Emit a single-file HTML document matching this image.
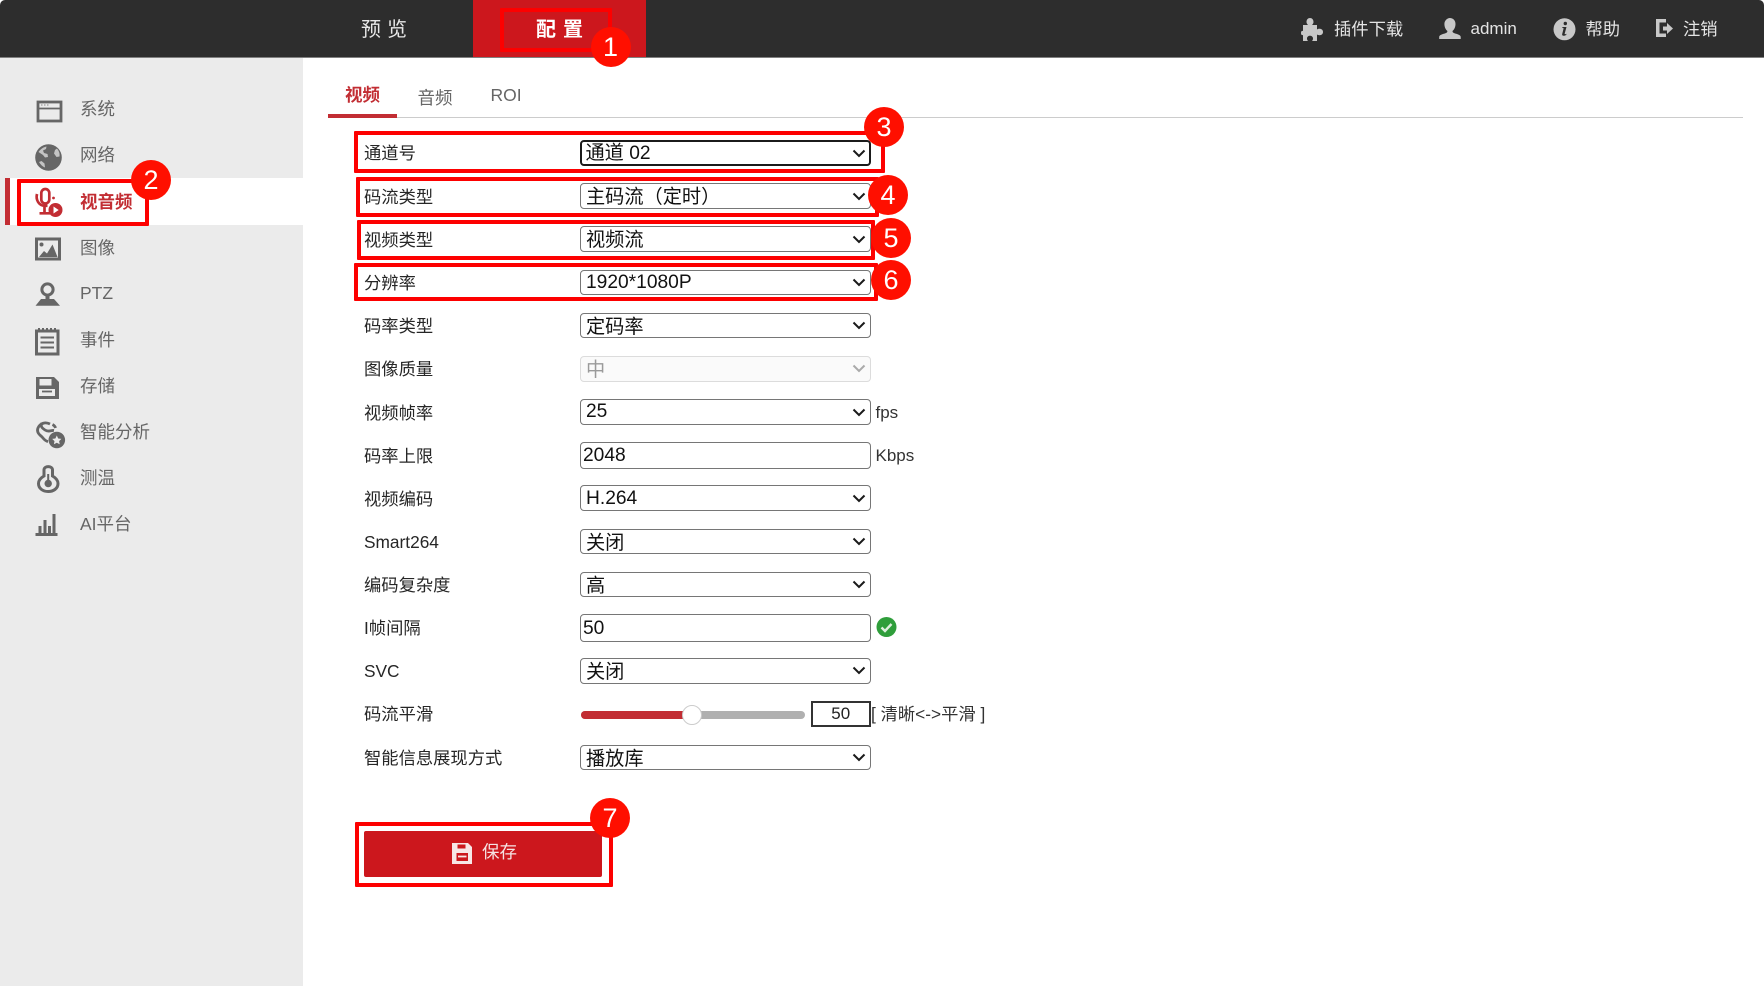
<!DOCTYPE html>
<html lang="zh-CN">
<head>
<meta charset="utf-8">
<title>配置</title>
<style>
html,body{margin:0;padding:0;background:#fff;}
body{position:relative;width:1764px;height:986px;overflow:hidden;font-family:"Liberation Sans","Noto Sans CJK SC",sans-serif;font-size:17.3px;color:#333;filter:blur(.3px);}
.abs,.t,.lb,select,input,.bx,.num,.chev{position:absolute;}
.t,.lb{line-height:24px;height:24px;white-space:nowrap;}
.lb{left:364px;color:#262626;}
.sd{left:80px;font-size:17.5px;color:#666;}
.tr{color:#e4e4e4;font-size:17.3px;}
select,input{box-sizing:border-box;left:580px;width:291px;height:25.5px;margin:0;background:#fff;border:1px solid #767676;border-radius:4px;color:#111;font-family:"Liberation Sans","Noto Sans CJK SC",sans-serif;font-size:19.2px;padding:2px 0 0 5px;-webkit-appearance:none;appearance:none;outline:none;line-height:23px;}
input{padding-left:2px;}
select:disabled{background:#fafafa;border-color:#dcdcdc;color:#9a9a9a;opacity:1;}
.chev{left:851.5px;width:14px;height:9px;}
.bx{box-sizing:border-box;border:4px solid #fd0000;border-radius:1px;}
.num{width:40px;height:40px;border-radius:50%;background:#ff0f00;color:#fff;text-align:center;font-size:27px;line-height:40px;z-index:5;}
</style>
</head>
<body>
<!-- top bar -->
<div class="abs" style="left:0;top:0;width:1764px;height:57px;background:#2d2d2d;border-bottom:1px solid #808080;border-radius:5px 5px 0 0;"></div>
<div class="abs" style="left:473px;top:0;width:173px;height:57px;background:#cc171d;"></div>
<div class="t" style="left:361px;top:18px;font-size:20px;letter-spacing:6px;color:#e8e8e8;">预览</div>
<div class="t" style="left:536px;top:18px;font-size:20px;letter-spacing:7px;color:#fff;font-weight:bold;">配置</div>
<div class="t tr" style="left:1334px;top:17px;">插件下载</div>
<div class="t tr" style="left:1470.5px;top:16.5px;font-size:17px;">admin</div>
<div class="t tr" style="left:1585.5px;top:17px;">帮助</div>
<div class="t tr" style="left:1683px;top:17px;">注销</div>

<!-- sidebar -->
<div class="abs" style="left:0;top:58px;width:303px;height:928px;background:#ebebeb;"></div>
<div class="abs" style="left:10px;top:178px;width:293px;height:47px;background:#fff;"></div>
<div class="abs" style="left:5px;top:178px;width:5px;height:47px;background:#c22d33;"></div>
<div class="t sd" style="top:96.5px;">系统</div>
<div class="t sd" style="top:142.5px;">网络</div>
<div class="t sd" style="top:189.5px;color:#c22d33;font-weight:bold;">视音频</div>
<div class="t sd" style="top:235.5px;">图像</div>
<div class="t sd" style="top:281px;">PTZ</div>
<div class="t sd" style="top:327.5px;">事件</div>
<div class="t sd" style="top:373.5px;">存储</div>
<div class="t sd" style="top:419.5px;">智能分析</div>
<div class="t sd" style="top:465.5px;">测温</div>
<div class="t sd" style="top:511.5px;">AI平台</div>

<!-- icons -->
<svg class="abs" style="left:0;top:0;z-index:1;" width="1764" height="986" viewBox="0 0 1764 986">
  <!-- top right -->
  <g fill="#c8c8c8">
    <path d="M1303 25H1308C1307 24 1306.500 23 1306.500 22C1306.500 19.500 1308 18 1310 18S1313.500 19.500 1313.500 22C1313.500 23 1313 24 1312 25H1317V29.500C1318 29 1318.500 28.800 1319.500 28.800C1321.500 28.800 1323 30 1323 32S1321.500 35.200 1319.500 35.200C1318.500 35.200 1318 35 1317 34.500V41H1312C1312.800 40 1313 39.500 1313 38.500C1313 36.800 1311.500 35.800 1310 35.800S1307 36.800 1307 38.500C1307 39.500 1307.200 40 1308 41H1303V35C1302 35.500 1301 35 1301 33S1302 30.500 1303 31Z"/>
    <path d="M1449.800 18c3.500 0 5.700 2.700 5.700 6 0 3-1.200 5.500-3 7 0 1.500 1 2 3 2.600 3 .8 5.200 1.700 5.200 3.400v2h-21.500v-2c0-1.700 2.200-2.600 5.200-3.400 2-.6 3-1.100 3-2.600-1.800-1.500-3-4-3-7 0-3.300 2.900-6 5.400-6z"/>
    <circle cx="1564.500" cy="29.300" r="11"/>
    <path d="M1656 19h10v3.500h-6.500v11h6.500v3.500h-10z"/>
    <path d="M1663 26.500h4v-3.500l6 5.500-6 5.500v-3.500h-4z"/>
  </g>
  <g fill="#2d2d2d">
    <circle cx="1565.300" cy="23.500" r="1.700"/>
    <path d="M1562.500 27h4l-1.800 6.500c-.2.800.5 1 1.800.2l-.3 1.300c-1.500 1-4.600 1.300-4-1l1.400-5.500c-.2-.5-.8-.5-1.400-.4z"/>
  </g>

  <!-- 系统 -->
  <g fill="none" stroke="#666" stroke-width="2.800">
    <rect x="38" y="102" width="23" height="19"/>
    <path d="M38 108.500h23" stroke-width="1.800"/>
  </g>
  <path d="M41 105h1.500M44 105h1.500M47 105h1.500" stroke="#888" stroke-width="1"/>
  <!-- 网络 -->
  <circle cx="48.500" cy="157.500" r="13.300" fill="#666"/>
  <path d="M38.500 152c2.500-3.500 5.500-5 8-5.500l-.5 2.500-3 1.500 1 2.500 3.500 1 .5 3-3 .5-2-2.500zM57 148.500c2 2.500 3 5 2.500 8l-3 .5-2.500-3.500 1-3.500zM39 162c1.500 2.500 3.500 4.500 6 5.500l-.5-4-3-2.500z" fill="#c4c4c4"/>
  <!-- 视音频 -->
  <g fill="none" stroke="#c22d33" stroke-width="2.700">
    <rect x="41.300" y="189" width="8" height="14.500" rx="4"/>
    <path d="M37 194c-1.500 6 2 11.500 7.500 11.800h3M44.500 206v6M39.500 213.300h10.500"/>
  </g>
  <circle cx="53.500" cy="198" r="1.400" fill="#c22d33"/>
  <circle cx="55.500" cy="210" r="7" fill="#c22d33"/>
  <path d="M53.500 206.500l5.200 3.500-5.200 3.500z" fill="#fff"/>
  <!-- 图像 -->
  <rect x="36.500" y="239" width="23" height="20" fill="none" stroke="#666" stroke-width="3"/>
  <circle cx="41.500" cy="244.500" r="2" fill="#666"/>
  <path d="M39 257l5-6 3 2.500 5.500-9 5 12.500z" fill="#666"/>
  <!-- PTZ -->
  <circle cx="47.500" cy="289.500" r="5.600" fill="none" stroke="#666" stroke-width="3"/>
  <path d="M45.500 294.500h4v5h-4z" fill="#666"/>
  <path d="M41 299h13l6 6.800H35.500z" fill="#666"/>
  <!-- 事件 -->
  <rect x="36.500" y="331" width="21.500" height="23" fill="none" stroke="#666" stroke-width="3"/>
  <path d="M39 328v4M43 328v4M47 328v4M51 328v4M55 328v4" stroke="#666" stroke-width="2"/>
  <path d="M40.500 337.500h13.500M40.500 342.500h13.500M40.500 347.500h13.500" stroke="#666" stroke-width="2"/>
  <!-- 存储 -->
  <path d="M36 377h18l5 5v17H36z" fill="#666"/>
  <path d="M39.500 379h12v6.500h-12zM39 389h16v7H39z" fill="#ebebeb"/>
  <path d="M42 391.500h10" stroke="#666" stroke-width="1.800"/>
  <!-- 智能分析 -->
  <path d="M50 424c-5-2.500-10-.5-12 4-1.500 3.500.5 6 3 8 2.500 2 3.500 5 7 5.500M42 423c-2 3 0 5 3 7 4 2.500 6 0 9 .5M55.500 428c-.5-2-2-3-3-3.500" fill="none" stroke="#666" stroke-width="2.800"/>
  <circle cx="56.800" cy="440" r="8.300" fill="#666"/>
  <path d="M56.800 435.500l1.400 3 3.200.4-2.300 2.200.6 3.200-2.900-1.600-2.900 1.600.6-3.200-2.300-2.200 3.200-.4z" fill="#ebebeb"/>
  <!-- 测温 -->
  <path d="M44 476v-6c0-4.500 8.500-4.500 8.500 0v6c3.500 2 5.500 4.500 5.500 7.500 0 5-4.500 8-9.800 8s-9.700-3-9.700-8c0-3 2-5.500 5.500-7.500z" fill="none" stroke="#666" stroke-width="3"/>
  <circle cx="48.200" cy="483.500" r="3.700" fill="#666"/>
  <path d="M48.200 474v8" stroke="#666" stroke-width="2"/>
  <!-- AI平台 -->
  <path d="M35.500 534.500h22" stroke="#666" stroke-width="3"/>
  <path d="M38.500 526h3v7h-3zM43.500 520h3v13h-3zM48 526h3v7h-3zM52.500 514h3v19h-3z" fill="#666"/>
</svg>

<!-- tabs -->
<div class="t" style="left:345px;top:83px;color:#c22d33;font-weight:bold;font-size:17.5px;">视频</div>
<div class="t" style="left:417.500px;top:86px;color:#666;font-size:17.500px;">音频</div>
<div class="t" style="left:490.500px;top:83px;color:#666;font-size:17.500px;">ROI</div>
<div class="abs" style="left:328px;top:117px;width:1415px;height:1px;background:#cccccc;"></div>
<div class="abs" style="left:328px;top:114px;width:69px;height:3.500px;background:#c22d33;"></div>

<!-- labels -->
<div class="t lb" style="top:141.300px;">通道号</div>
<div class="t lb" style="top:184.500px;">码流类型</div>
<div class="t lb" style="top:227.700px;">视频类型</div>
<div class="t lb" style="top:270.900px;">分辨率</div>
<div class="t lb" style="top:314.100px;">码率类型</div>
<div class="t lb" style="top:357.300px;">图像质量</div>
<div class="t lb" style="top:400.500px;">视频帧率</div>
<div class="t lb" style="top:443.700px;">码率上限</div>
<div class="t lb" style="top:486.900px;">视频编码</div>
<div class="t lb" style="top:529.600px;">Smart264</div>
<div class="t lb" style="top:573.300px;">编码复杂度</div>
<div class="t lb" style="top:616px;">I帧间隔</div>
<div class="t lb" style="top:658.700px;">SVC</div>
<div class="t lb" style="top:702.400px;">码流平滑</div>
<div class="t lb" style="top:746px;">智能信息展现方式</div>

<!-- controls -->
<select style="top:140px;border:2.500px solid #1b1b1b;padding:0 0 1.500px 3.500px;"><option>通道 02</option></select>
<select style="top:183.200px;"><option>主码流（定时）</option></select>
<select style="top:226.400px;"><option>视频流</option></select>
<select style="top:269.600px;padding-top:0;padding-bottom:1.500px;"><option>1920*1080P</option></select>
<select style="top:312.800px;"><option>定码率</option></select>
<select style="top:356px;" disabled><option>中</option></select>
<select style="top:399.200px;padding-top:0;"><option>25</option></select>
<input style="top:441.500px;height:27px;" value="2048">
<select style="top:485.400px;padding-top:1px;"><option>H.264</option></select>
<select style="top:528.600px;"><option>关闭</option></select>
<select style="top:571.800px;"><option>高</option></select>
<input style="top:613.700px;height:28px;" value="50">
<select style="top:658px;"><option>关闭</option></select>
<select style="top:744.500px;"><option>播放库</option></select>

<svg class="chev" style="top:148.500px;" viewBox="0 0 14 9"><path d="M1.500 1.500L7 7l5.500-5.500" fill="none" stroke="#1a1a1a" stroke-width="2"/></svg>
<svg class="chev" style="top:191.500px;" viewBox="0 0 14 9"><path d="M1.500 1.500L7 7l5.500-5.500" fill="none" stroke="#1a1a1a" stroke-width="2"/></svg>
<svg class="chev" style="top:234.700px;" viewBox="0 0 14 9"><path d="M1.500 1.500L7 7l5.500-5.500" fill="none" stroke="#1a1a1a" stroke-width="2"/></svg>
<svg class="chev" style="top:277.900px;" viewBox="0 0 14 9"><path d="M1.500 1.500L7 7l5.500-5.500" fill="none" stroke="#1a1a1a" stroke-width="2"/></svg>
<svg class="chev" style="top:321.100px;" viewBox="0 0 14 9"><path d="M1.500 1.500L7 7l5.500-5.500" fill="none" stroke="#1a1a1a" stroke-width="2"/></svg>
<svg class="chev" style="top:364.300px;" viewBox="0 0 14 9"><path d="M1.500 1.500L7 7l5.500-5.500" fill="none" stroke="#aaaaaa" stroke-width="2"/></svg>
<svg class="chev" style="top:407.500px;" viewBox="0 0 14 9"><path d="M1.500 1.500L7 7l5.500-5.500" fill="none" stroke="#1a1a1a" stroke-width="2"/></svg>
<svg class="chev" style="top:493.700px;" viewBox="0 0 14 9"><path d="M1.500 1.500L7 7l5.500-5.500" fill="none" stroke="#1a1a1a" stroke-width="2"/></svg>
<svg class="chev" style="top:536.900px;" viewBox="0 0 14 9"><path d="M1.500 1.500L7 7l5.500-5.500" fill="none" stroke="#1a1a1a" stroke-width="2"/></svg>
<svg class="chev" style="top:580.100px;" viewBox="0 0 14 9"><path d="M1.500 1.500L7 7l5.500-5.500" fill="none" stroke="#1a1a1a" stroke-width="2"/></svg>
<svg class="chev" style="top:666.300px;" viewBox="0 0 14 9"><path d="M1.500 1.500L7 7l5.500-5.500" fill="none" stroke="#1a1a1a" stroke-width="2"/></svg>
<svg class="chev" style="top:752.800px;" viewBox="0 0 14 9"><path d="M1.500 1.500L7 7l5.500-5.500" fill="none" stroke="#1a1a1a" stroke-width="2"/></svg>

<div class="t" style="left:875.500px;top:400.500px;font-size:17px;color:#333;">fps</div>
<div class="t" style="left:875.500px;top:443.500px;font-size:17px;color:#333;">Kbps</div>

<!-- check icon -->
<svg class="abs" style="left:876px;top:617px;" width="21" height="20" viewBox="0 0 21 20">
  <circle cx="10.500" cy="10" r="10" fill="#2f9e3b"/>
  <path d="M5.500 10.500l3.500 3.500 6.500-7" fill="none" stroke="#dff0df" stroke-width="2.400"/>
</svg>

<!-- slider -->
<div class="abs" style="left:580.500px;top:710.500px;width:224.500px;height:8.500px;background:#b0b0b0;border-radius:4px;"></div>
<div class="abs" style="left:580.500px;top:710.500px;width:112px;height:8.500px;background:#c22d33;border-radius:4px 0 0 4px;"></div>
<div class="abs" style="left:681.500px;top:704.500px;width:20px;height:20px;box-sizing:border-box;background:#fff;border:1px solid #cccccc;border-radius:50%;"></div>
<div class="abs" style="left:811px;top:701px;width:59.500px;height:25.500px;box-sizing:border-box;border:2px solid #333;text-align:center;font-size:17px;line-height:21px;color:#222;">50</div>
<div class="t" style="left:871px;top:702px;font-size:17.300px;color:#333;">[ 清晰&lt;-&gt;平滑 ]</div>

<!-- save button -->
<div class="abs" style="left:364px;top:831px;width:237.500px;height:46px;background:#cc171d;border-radius:2px;"></div>
<svg class="abs" style="left:451px;top:843px;" width="22" height="21" viewBox="0 0 22 21">
  <path d="M1 0h16l4 4v17H1z" fill="#f7e6e6"/>
  <path d="M6.500 1.500h8v4h-8z" fill="#cc171d"/>
  <path d="M5.500 10h11.500v8H5.500z" fill="#cc171d"/>
  <path d="M7 13.500h8.500" stroke="#f7e6e6" stroke-width="1.800"/>
</svg>
<div class="t" style="left:482px;top:840px;color:#f5e3e3;font-size:17.500px;">保存</div>

<!-- annotations -->
<div class="bx" style="left:500px;top:8px;width:112px;height:44px;"></div>
<div class="bx" style="left:17px;top:179px;width:132px;height:47px;"></div>
<div class="bx" style="left:354px;top:131px;width:531px;height:42px;"></div>
<div class="bx" style="left:356px;top:176.500px;width:523px;height:40px;"></div>
<div class="bx" style="left:357px;top:220px;width:518px;height:40px;"></div>
<div class="bx" style="left:354px;top:263px;width:524px;height:38px;"></div>
<div class="bx" style="left:355px;top:822px;width:258px;height:65px;"></div>

<div class="num" style="left:590.500px;top:27px;">1</div>
<div class="num" style="left:131px;top:160px;">2</div>
<div class="num" style="left:864px;top:107px;">3</div>
<div class="num" style="left:868px;top:175px;">4</div>
<div class="num" style="left:871px;top:218px;">5</div>
<div class="num" style="left:871px;top:260px;">6</div>
<div class="num" style="left:590px;top:798px;">7</div>
</body>
</html>
